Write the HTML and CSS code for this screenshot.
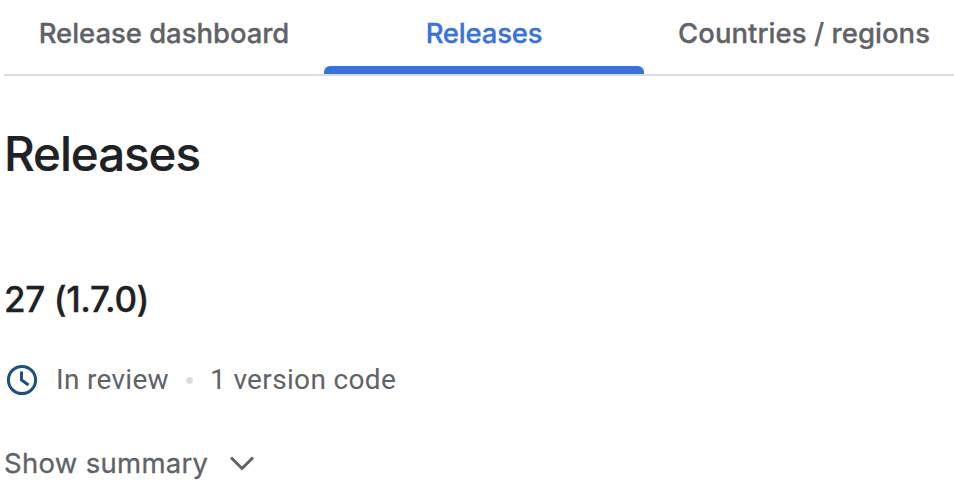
FILE: index.html
```html
<!DOCTYPE html>
<html lang="en">
<head>
<meta charset="utf-8">
<title>Releases</title>
<link rel="stylesheet" href="styles.css">
</head>
<body>
<nav class="tabs">
  <a class="tab"><span class="label label-dashboard">Release dashboard</span></a>
  <a class="tab tab-active"><span class="label label-releases">Releases</span></a>
  <a class="tab tab-countries"><span class="label label-countries">Countries / regions</span></a>
</nav>
<main class="content">
  <h1 class="title">Releases</h1>
  <h2 class="version">27 (1.7.0)</h2>
  <div class="status">
    <svg class="clock" viewBox="0 0 32 32" width="32" height="32"><circle cx="16" cy="16" r="13.600"/><path d="M15.500 7.500v8.500l7 5"/></svg>
    <span class="review">In review</span>
    <span class="dot"></span>
    <span class="codes">1 version code</span>
  </div>
  <div class="summary">
    <span class="summary-text">Show summary</span>
    <svg class="chevron" viewBox="0 0 24 16" width="24" height="16"><path d="M1 2.500 12 13.500 23 2.500"/></svg>
  </div>
</main>
</body>
</html>
```
FILE: styles.css
```css
* { box-sizing: border-box; }
body { margin: 0; width: 954px; height: 486px; overflow: hidden; background: #fff; color: #202124; font-family: Inter, sans-serif; }
.tabs { display: grid; grid-template-columns: 320px 320px 310px; height: 76px; margin-left: 4px; border-bottom: 2px solid #dadce0; }
.tab { display: flex; justify-content: center; height: 74px; padding-top: 14px; font-size: 27.5px; line-height: 38px; font-weight: 500; color: #5f6368; white-space: nowrap; -webkit-text-stroke: .3px currentColor; }
.label-dashboard { letter-spacing: -.05px; }
.label-releases { letter-spacing: -.2px; }
.label-countries { letter-spacing: .05px; }
.tab-active { position: relative; color: #3871e0; }
.tab-active::after { content: ""; position: absolute; inset: auto 0 0; height: 8px; border-radius: 6px 6px 0 0; background: #3871e0; }
.tab-countries { justify-content: flex-start; padding-left: 34px; }
.content { padding-left: 4px; }
.title { margin: 48px 0 0; font-size: 47.5px; line-height: 60px; font-weight: 500; letter-spacing: -1.05px; -webkit-text-stroke: .2px currentColor; }
.version { margin: 91px 0 0; font-size: 35px; line-height: 48px; font-weight: 500; letter-spacing: -.4px; -webkit-text-stroke: .3px currentColor; }
.status { display: flex; align-items: center; height: 40px; margin-top: 37px; padding-left: 2px; font: 28px/40px Roboto, sans-serif; letter-spacing: .35px; color: #5f6368; white-space: nowrap; }
.clock { flex: none; fill: none; stroke: #1d4f82; stroke-width: 3; }
.review { width: 113px; margin-left: 18px; letter-spacing: .3px; }
.dot { width: 7px; height: 7px; margin: 0 17px; border-radius: 50%; background: #dadce0; }
.summary { display: flex; align-items: center; height: 40px; margin-top: 43px; font-size: 27.5px; color: #5f6368; }
.summary-text { width: 203px; white-space: nowrap; letter-spacing: .3px; -webkit-text-stroke: .3px currentColor; }
.chevron { margin-left: 23px; fill: none; stroke: #5f6368; stroke-width: 3; }
```
